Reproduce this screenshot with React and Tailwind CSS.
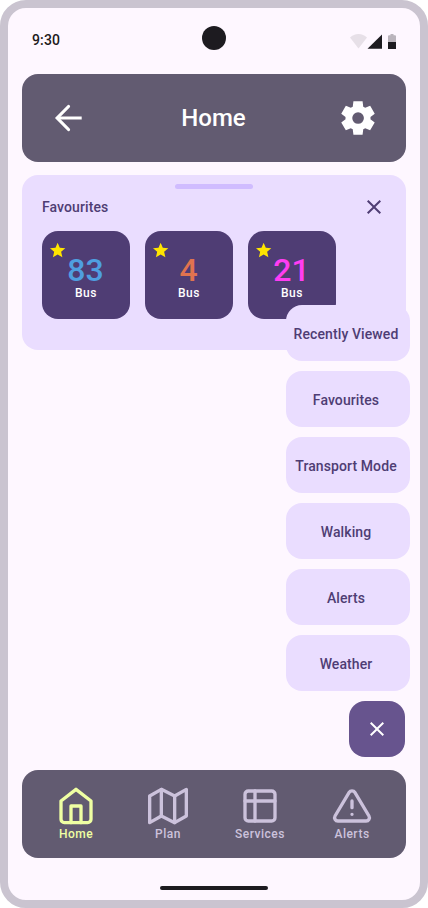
import React from "react";

const routes = [
  { number: "83", color: "text-[#4f9fe0]" },
  { number: "4", color: "text-[#e0734f]" },
  { number: "21", color: "text-[#ff3df2]" },
];

const menu = ["Recently Viewed", "Favourites", "Transport Mode", "Walking", "Alerts", "Weather"];

function StrokeIcon({ children }) {
  return (
    <svg className="size-10" viewBox="0 0 24 24" fill="none" stroke="currentColor" strokeWidth="2" strokeLinecap="round" strokeLinejoin="round">
      {children}
    </svg>
  );
}

const tabs = [
  {
    label: "Home",
    active: true,
    icon: (
      <>
        <path d="M3 9l9-7 9 7v11a2 2 0 0 1-2 2H5a2 2 0 0 1-2-2z" />
        <path d="M9 22V12h6v10" />
      </>
    ),
  },
  {
    label: "Plan",
    icon: (
      <>
        <path d="M1 6v16l7-4 8 4 7-4V2l-7 4-8-4-7 4z" />
        <path d="M8 2v16M16 6v16" />
      </>
    ),
  },
  {
    label: "Services",
    icon: (
      <>
        <rect x="3" y="3" width="18" height="18" rx="2" />
        <path d="M3 9h18M9 3v18" />
      </>
    ),
  },
  {
    label: "Alerts",
    icon: (
      <>
        <path d="M10.29 3.86L1.82 18a2 2 0 0 0 1.71 3h16.94a2 2 0 0 0 1.71-3L13.71 3.86a2 2 0 0 0-3.42 0z" />
        <path d="M12 9v4M12 17h.01" />
      </>
    ),
  },
];

function CloseIcon() {
  return (
    <svg className="size-6" viewBox="0 0 24 24" fill="currentColor">
      <path d="M6.4 19L5 17.6l5.6-5.6L5 6.4 6.4 5l5.6 5.6L17.6 5 19 6.4 13.4 12l5.6 5.6-1.4 1.4-5.6-5.6L6.4 19z" />
    </svg>
  );
}

function StatusBar() {
  return (
    <div className="relative flex h-[52px] items-end justify-between px-6 pb-2.5">
      <span className="text-sm leading-5 font-medium tracking-[0.14px] text-[#1d1b20]">9:30</span>
      <div className="absolute top-[18px] left-[194px] size-6 rounded-full bg-[#1d1b20]" />
      <svg className="mb-px h-4 w-[46px]" viewBox="0 0 46 16" fill="#1d1b20">
        <path d="M0 4.500C2.300 2.300 5.300 1 8.500 1s6.200 1.300 8.500 3.500L8.500 15.500z" opacity="0.1" />
        <path d="M17.500 15.800H32V1.500z" />
        <path d="M38 9V3.300a1 1 0 0 1 1-1h1.500V1h3v1.300H45a1 1 0 0 1 1 1V9z" opacity="0.3" />
        <path d="M38 9h8v6.500a.5.5 0 0 1-.5.5h-7a.5.5 0 0 1-.5-.5z" />
      </svg>
    </div>
  );
}

function RouteCard({ number, color }) {
  return (
    <div className="relative flex size-[88px] flex-col items-center rounded-2xl bg-[#4f3d74] pt-6">
      <svg className="absolute top-[11px] left-[7px] size-4" viewBox="0.7 1.1 20.9 20.9" overflow="visible" fill="#ffe500">
        <path d="M12 17.270L18.180 21l-1.640-7.030L22 9.240l-7.190-.61L12 2 9.190 8.630 2 9.240l5.460 4.730L5.820 21z" />
      </svg>
      <span className={"-ml-px text-[32px] leading-[30px] font-medium " + color}>{number}</span>
      <span className="text-xs leading-4 font-medium tracking-[0.5px] text-white">Bus</span>
    </div>
  );
}

export default function App() {
  return (
    <div className="relative flex h-[908px] w-[428px] flex-col overflow-hidden rounded-[26px] border-8 border-[#cac4d0] bg-[#fef7ff] font-[Roboto,sans-serif]">
      <StatusBar />
      <header className="mx-3.5 mt-3.5 flex h-[88px] shrink-0 items-center justify-between rounded-2xl bg-[#625b71] pr-7 pl-[26px] text-white">
        <svg className="size-10" viewBox="0 0 40 40" fill="none" stroke="currentColor" strokeWidth="3.2">
          <path d="M33.7 20H10" />
          <path d="M20.500 8.500L9.200 20l11.300 11.500" strokeLinecap="round" />
        </svg>
        <h1 className="ml-px text-2xl leading-8 font-medium">Home</h1>
        <svg className="size-10" viewBox="0 0 24 24" fill="currentColor">
          <path d="M9.25 22l-.4-3.2q-.325-.125-.612-.3-.288-.175-.563-.375L4.7 19.375l-2.75-4.75 2.575-1.95Q4.5 12.5 4.5 12.337v-.675q0-.162.025-.337L1.95 9.375l2.75-4.75 2.975 1.25q.275-.2.575-.375.3-.175.6-.3l.4-3.2h5.5l.4 3.2q.325.125.613.3.287.175.562.375l2.975-1.25 2.75 4.75-2.575 1.95q.025.175.025.337v.675q0 .163-.05.338l2.575 1.95-2.75 4.75-2.95-1.25q-.275.2-.575.375-.3.175-.6.3l-.4 3.2Zm2.8-6.5q1.45 0 2.475-1.025Q15.55 13.45 15.55 12q0-1.45-1.025-2.475Q13.5 8.5 12.05 8.5q-1.475 0-2.488 1.025Q8.55 10.55 8.55 12q0 1.45 1.012 2.475Q10.575 15.5 12.05 15.5Z" />
        </svg>
      </header>

      <section className="mx-3.5 mt-[13px] flex h-[175px] shrink-0 flex-col rounded-2xl bg-[#eaddff] px-5 pt-[9px] text-[#4f3d74]">
        <div className="h-[5px] w-[78px] self-center rounded-full bg-[#d0bcff]" />
        <div className="mt-1.5 flex h-6 items-center justify-between">
          <h2 className="text-sm leading-5 font-medium tracking-[0.1px]">Favourites</h2>
          <CloseIcon />
        </div>
        <div className="mt-3 flex gap-[15px]">
          {routes.map((r) => (
            <RouteCard key={r.number} {...r} />
          ))}
        </div>
      </section>

      <div className="absolute top-[297px] right-[10px] flex flex-col items-end gap-2.5">
        {menu.map((label) => (
          <button key={label} className="flex h-14 w-[124px] items-center justify-center rounded-2xl bg-[#eaddff] pt-0.5 pr-1 text-sm leading-5 font-medium tracking-[0.1px] whitespace-nowrap text-[#4f3d74]">
            {label}
          </button>
        ))}
        <button className="mr-[5px] flex size-14 items-center justify-center rounded-2xl bg-[#67548e] text-white">
          <CloseIcon />
        </button>
      </div>

      <nav className="mx-3.5 mt-auto flex h-[88px] shrink-0 justify-between rounded-2xl bg-[#625b71] px-2 pt-4">
        {tabs.map((t) => (
          <div key={t.label} className={"flex w-[92px] flex-col items-center " + (t.active ? "text-[#efffa3]" : "text-[#ccc2dc]")}>
            <StrokeIcon>{t.icon}</StrokeIcon>
            <span className="text-xs leading-4 font-medium tracking-[0.5px]">{t.label}</span>
          </div>
        ))}
      </nav>
      <div className="mt-7 mb-[10px] h-1 w-[108px] shrink-0 self-center rounded-full bg-[#1d1b20]" />
    </div>
  );
}
